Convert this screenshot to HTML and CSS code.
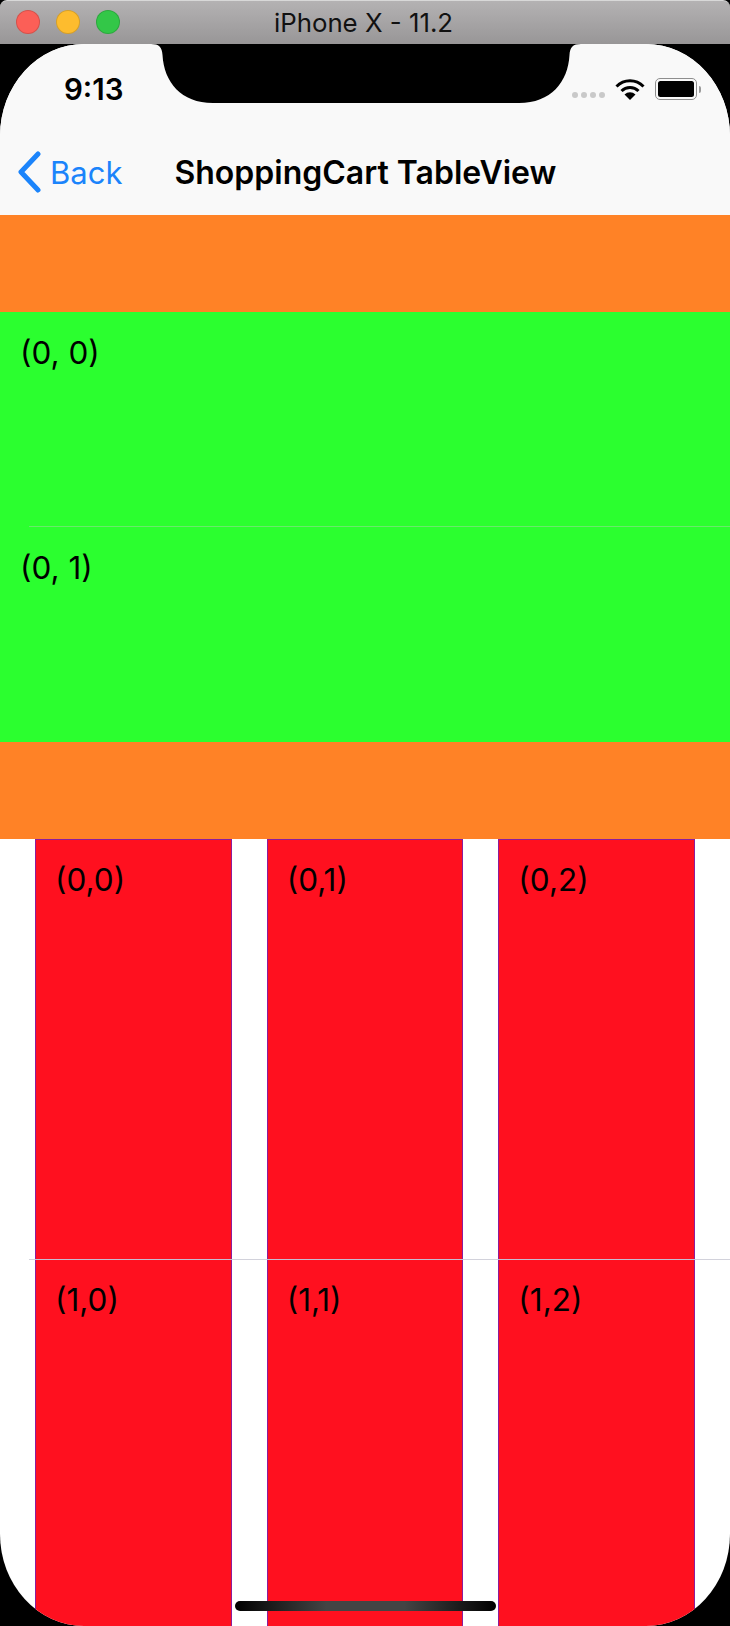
FILE: index.html
```html
<!DOCTYPE html>
<html>
<head>
	<title>iPhone X - 11.2</title>
	<meta charset="UTF-8">
	<link rel="stylesheet" href="styles.css">
</head>
<body>

<header class="titlebar">
	<div class="lights">
		<span class="light red"></span>
		<span class="light yellow"></span>
		<span class="light green"></span>
	</div>
	<div class="window-title">iPhone X - 11.2</div>
</header>

<div class="screen">
	<svg class="notch" width="430" height="60" viewBox="0 0 430 60">
		<path d="M0 0 C8 0 11 3 11.500 11 C13 38 30 59 62 59 L368 59 C400 59 417 38 418.500 11 C419 3 422 0 430 0 Z"/>
	</svg>

	<div class="nav">
		<div class="status">
			<span class="time">9:13</span>
			<div class="status-icons">
				<div class="signal"><i></i><i></i><i></i><i></i></div>
				<svg class="wifi" width="30" height="22" viewBox="0 0 30 22">
					<path d="M1.500 7.500 A19 19 0 0 1 28.500 7.500" fill="none" stroke="#000" stroke-width="3"/>
					<path d="M6.500 12 A12 12 0 0 1 23.500 12" fill="none" stroke="#000" stroke-width="3"/>
					<path d="M15 21 L9.500 15.500 A8 8 0 0 1 20.500 15.500 Z"/>
				</svg>
				<div class="battery"><div class="battery-fill"></div></div>
				<div class="battery-cap"></div>
			</div>
		</div>
		<div class="nav-row">
			<div class="back">
				<svg width="26" height="42" viewBox="0 0 26 42">
					<path d="M22 3 L5 21 L22 39" fill="none" stroke="#1b84fb" stroke-width="5" stroke-linecap="round" stroke-linejoin="round"/>
				</svg>
				<span>Back</span>
			</div>
			<h1>ShoppingCart TableView</h1>
		</div>
	</div>

	<div class="band"></div>
	<div class="table-row"><span>(0, 0)</span></div>
	<div class="table-row"><span>(0, 1)</span></div>
	<div class="band"></div>

	<div class="grid-row">
		<div class="cell">(0,0)</div>
		<div class="cell">(0,1)</div>
		<div class="cell">(0,2)</div>
	</div>
	<div class="grid-row">
		<div class="cell">(1,0)</div>
		<div class="cell">(1,1)</div>
		<div class="cell">(1,2)</div>
	</div>

	<div class="home-bar"></div>
</div>

</body>
</html>
```

FILE: styles.css
```css
html, body {
	margin: 0;
	height: 1626px;
	overflow: hidden;
	background: #000;
}
body {
	width: 730px;
	font-family: Inter, "Liberation Sans", sans-serif;
	color: #000;
}

.titlebar {
	height: 44px;
	box-sizing: border-box;
	display: flex;
	align-items: center;
	justify-content: center;
	position: relative;
	background: linear-gradient(#b4b2b3, #989697);
	border-top: 1px solid #d8d8d8;
	border-radius: 7px 7px 0 0;
}
.lights {
	position: absolute;
	left: 16px;
	top: 9px;
	display: flex;
	gap: 16px;
}
.light {
	width: 22px;
	height: 22px;
	border-radius: 50%;
	border: 1px solid rgba(0,0,0,0.15);
}
.red { background: #fc5f57; }
.yellow { background: #fdbc2e; }
.green { background: #33c748; }
.window-title {
	font-size: 25.800px;
	color: #111;
	margin: -1px 0 0 -3px;
}

.screen {
	position: relative;
	height: 1582px;
	overflow: hidden;
	background: #fff;
	border-radius: 84px / 92px;
}
.notch {
	position: absolute;
	left: 151px;
	top: 0;
	fill: #000;
}

.nav {
	height: 171px;
	background: #f9f9f9;
	display: flex;
	flex-direction: column;
}
.status {
	height: 85px;
	display: flex;
	align-items: flex-start;
	justify-content: space-between;
	padding: 33px 29px 0 64px;
	box-sizing: border-box;
}
.time {
	font-size: 29.500px;
	font-weight: 600;
	line-height: 24px;
}
.status-icons {
	display: flex;
	align-items: center;
	height: 24px;
}
.signal {
	display: flex;
	gap: 3px;
	margin: 12px 10px 0 0;
}
.signal i {
	width: 6px;
	height: 6px;
	border-radius: 50%;
	background: #c9c9c9;
}
.wifi {
	margin: 1px 10px 0 0;
}
.battery {
	width: 42px;
	height: 22px;
	box-sizing: border-box;
	border: 1.500px solid #8e8e8e;
	border-radius: 5px;
	padding: 2px;
}
.battery-fill {
	height: 100%;
	background: #000;
	border-radius: 2.500px;
}
.battery-cap {
	width: 2px;
	height: 7px;
	margin-left: 2px;
	background: #9a9a9a;
	border-radius: 0 2px 2px 0;
}

.nav-row {
	display: flex;
	align-items: center;
	height: 86px;
}
.back {
	display: flex;
	align-items: center;
	color: #1b84fb;
	font-size: 31px;
	padding-left: 16px;
	gap: 8px;
}
.nav-row h1 {
	margin: 0 0 0 52px;
	font-size: 32px;
	font-weight: 600;
	white-space: nowrap;
}

.band {
	height: 97px;
	background: #ff8226;
}
.table-row {
	height: 215px;
	box-sizing: border-box;
	background: #2bff2f;
	padding: 23px 0 0 20px;
	font-size: 31.500px;
	line-height: 36px;
	position: relative;
}
.table-row + .table-row::before {
	content: "";
	position: absolute;
	left: 29px;
	right: 0;
	top: -1px;
	height: 1px;
	background: rgba(200,200,200,0.4);
}

.grid-row {
	height: 420px;
	display: grid;
	grid-template-columns: repeat(3, 1fr);
	gap: 35px;
	padding: 0 35px;
	position: relative;
}
.grid-row::after {
	content: "";
	position: absolute;
	left: 29px;
	right: 0;
	bottom: -1px;
	height: 1px;
	background: rgba(205,205,215,0.9);
	z-index: 1;
}
.grid-row + .grid-row::after {
	display: none;
}
.cell {
	background: #ff101f;
	border: 1px solid #8c1d9c;
	border-width: 1px 1px 0;
	box-sizing: border-box;
	padding: 22px 0 0 19px;
	font-size: 31.500px;
	line-height: 36px;
}

.home-bar {
	position: absolute;
	left: 235px;
	bottom: 15px;
	width: 261px;
	height: 10px;
	border-radius: 5px;
	background: linear-gradient(90deg, #000, #444 35%, #444 65%, #000);
}
```
